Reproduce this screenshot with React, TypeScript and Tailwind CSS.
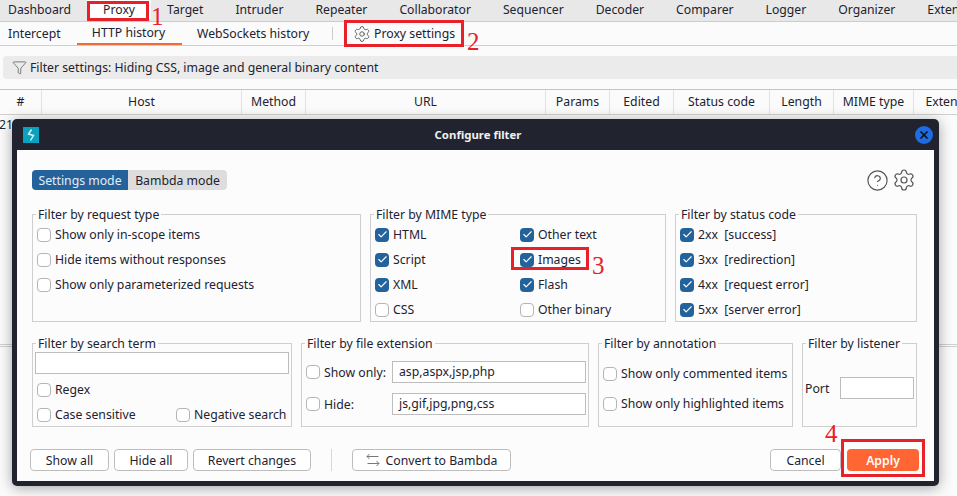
import { Settings, CircleHelp, Check, X, Funnel } from 'lucide-react';

const topTabs = [
  'Dashboard',
  'Proxy',
  'Target',
  'Intruder',
  'Repeater',
  'Collaborator',
  'Sequencer',
  'Decoder',
  'Comparer',
  'Logger',
  'Organizer',
  'Extensions',
];

const columns = [
  ['#', 'w-[42px]'],
  ['Host', 'w-[200px]'],
  ['Method', 'w-[64px]'],
  ['URL', 'w-[240px]'],
  ['Params', 'w-[64px]'],
  ['Edited', 'w-[64px]'],
  ['Status code', 'w-[96px]'],
  ['Length', 'w-[64px]'],
  ['MIME type', 'w-[80px]'],
  ['Extension', 'w-[80px]'],
];

function Box({ checked, label, className }: { checked?: boolean; label: string; className?: string }) {
  return (
    <div className={`flex items-center gap-1 h-[25px] whitespace-pre ${className ?? ''}`}>
      {checked ? (
        <span className="w-[14px] h-[14px] rounded-[4px] bg-[#23629b] flex items-center justify-center shrink-0">
          <Check size={11} strokeWidth={2.5} className="text-white" />
        </span>
      ) : (
        <span className="w-[14px] h-[14px] rounded-[4px] border border-[#b5b5b5] bg-white shrink-0" />
      )}
      <span>{label}</span>
    </div>
  );
}

function Group({ title, className, children }: { title: string; className: string; children?: React.ReactNode }) {
  return (
    <fieldset className={`border border-[#cfcfcf] min-w-0 shrink-0 ${className}`}>
      <legend className="ml-[3px] px-[2px] h-[18px] leading-[20px]">{title}</legend>
      {children}
    </fieldset>
  );
}

function Button({ className, children }: { className: string; children: React.ReactNode }) {
  return (
    <button className={`h-[22px] rounded-[4px] border border-[#bdbdbd] bg-white flex items-center justify-center shrink-0 ${className}`}>
      {children}
    </button>
  );
}

function Marker({ n, className }: { n: string; className: string }) {
  return (
    <span className={`absolute text-[#e8202a] text-[25px] leading-none font-['Liberation_Serif',serif] ${className}`}>{n}</span>
  );
}

export default function App() {
  return (
    <div className="relative w-[957px] h-[496px] overflow-hidden bg-[#fbfbfb] text-[#1c2230] text-[12.25px] leading-[19px] font-['Noto_Sans',sans-serif]">

      {/* Main tabs */}
      <div className="flex h-[22px] -ml-2 bg-[#e8e8e8] border-b border-[#cccccc] whitespace-nowrap text-[12.2px]">
        {topTabs.map((name) => (
          <div key={name} className={`px-4 shrink-0 flex items-center h-[19px] ${name === 'Proxy' ? 'bg-white' : ''}`}>
            {name}
          </div>
        ))}
      </div>

      {/* Proxy tabs */}
      <div className="flex items-center h-[24px] border-b border-[#cfcfcf]">
        <div className="w-[77px] pl-2">Intercept</div>
        <div className="w-[105px] h-full flex items-center justify-center pr-[2px] border-b-2 border-[#f26a35]">HTTP history</div>
        <div className="ml-[15px] w-[135px]">WebSockets history</div>
        <div className="w-px h-[13px] bg-[#cccccc]" />
        <div className="ml-[20px] flex items-center gap-[3px]">
          <Settings size={18} strokeWidth={1.2} className="text-[#555555]" />
          Proxy settings
        </div>
      </div>

      {/* Filter bar */}
      <div className="mt-[10px] ml-[3px] h-[23px] bg-[#ebebeb] rounded-l-[4px] flex items-center gap-[3px] pl-[9px]">
        <Funnel size={15} strokeWidth={1.2} className="text-[#555555]" />
        Filter settings: Hiding CSS, image and general binary content
      </div>

      {/* Table */}
      <div className="mt-[10px] flex h-[26px] border-y border-[#d0d0d0] border-t-[#c4c4c4] whitespace-nowrap">
        {columns.map(([name, w]) => (
          <div key={name} className={`${w} shrink-0 flex items-center justify-center pb-px border-r border-[#e2e2e2]`}>
            {name}
          </div>
        ))}
      </div>
      <div className="-ml-px h-[18px]">219</div>
      <div className="mt-[211px] h-[3px] border-y border-[#d0d0d0]" />

      {/* Dialog */}
      <div className="absolute left-[12px] top-[119px] w-[927px] h-[367px] rounded-[5px] bg-[#21242e] shadow-[0_2px_14px_rgba(0,0,0,0.35)] flex flex-col px-[5px] pb-[5px]">
        <div className="relative h-[31px] shrink-0 flex items-center justify-center -mx-[5px] pl-[5px]">
          <span className="absolute left-[11px] top-[8px] w-4 h-4 bg-[#0ba2bd] flex items-center justify-center">
            <svg width="8" height="12" viewBox="0 0 8 12" fill="none" stroke="#dff6fa" strokeWidth="1.4">
              <path d="M4.5 0.5 L1.5 5 L6.5 6.5 L3.5 11.5" />
            </svg>
          </span>
          <span className="text-[11.4px] font-bold text-[#eef0f3]">Configure filter</span>
          <span className="absolute right-[6px] top-[7px] w-[18px] h-[18px] rounded-full bg-[#1f6be0] flex items-center justify-center">
            <X size={12} strokeWidth={3.5} className="text-[#10131a]" />
          </span>
        </div>

        <div className="flex-1 bg-[#fcfcfc] pl-[15px] pt-[20px] flex flex-col">
          <div className="flex items-center h-[20px]">
            <div className="w-[96px] h-full bg-[#23629b] text-[#e4edf5] rounded-l-[4px] flex items-center justify-center">Settings mode</div>
            <div className="w-[99px] h-full bg-[#dddddd] rounded-r-[4px] flex items-center justify-center">Bambda mode</div>
            <div className="ml-auto mr-[18px] flex items-center gap-[3px] text-[#555555]">
              <CircleHelp size={23} strokeWidth={1.2} />
              <Settings size={24} strokeWidth={1.2} />
            </div>
          </div>

          <div className="flex gap-[9px] mt-[15px] h-[117px]">
            <Group title="Filter by request type" className="w-[329px]">
              <div className="-mt-[1px] pl-[4px]">
                <Box label="Show only in-scope items" />
                <Box label="Hide items without responses" />
                <Box label="Show only parameterized requests" />
              </div>
            </Group>
            <Group title="Filter by MIME type" className="w-[296px]">
              <div className="-mt-[1px] pl-[4px] grid grid-cols-[145px_1fr]">
                <Box checked label="HTML" />
                <Box checked label="Other text" />
                <Box checked label="Script" />
                <Box checked label="Images" />
                <Box checked label="XML" />
                <Box checked label="Flash" />
                <Box label="CSS" />
                <Box label="Other binary" />
              </div>
            </Group>
            <Group title="Filter by status code" className="w-[242px]">
              <div className="-mt-[1px] pl-[4px]">
                <Box checked label="2xx  [success]" />
                <Box checked label="3xx  [redirection]" />
                <Box checked label="4xx  [request error]" />
                <Box checked label="5xx  [server error]" />
              </div>
            </Group>
          </div>

          <div className="flex gap-[9px] mt-[12px] h-[93px]">
            <Group title="Filter by search term" className="w-[260px]">
              <div className="px-[2px]">
                <div className="h-[22px] border border-[#bdbdbd] bg-white" />
                <Box label="Regex" className="pl-[2px] mt-[3px]" />
                <div className="flex">
                  <Box label="Case sensitive" className="pl-[2px] w-[141px]" />
                  <Box label="Negative search" />
                </div>
              </div>
            </Group>
            <Group title="Filter by file extension" className="w-[288px]">
              <div className="pl-[4px]">
                <div className="flex items-center mt-[9px] h-[22px]">
                  <Box label="Show only:" className="w-[86px]" />
                  <div className="w-[194px] h-[22px] border border-[#bdbdbd] bg-white pl-[6px] leading-[20px]">asp,aspx,jsp,php</div>
                </div>
                <div className="flex items-center mt-[10px] h-[22px]">
                  <Box label="Hide:" className="w-[86px]" />
                  <div className="w-[194px] h-[22px] border border-[#bdbdbd] bg-white pl-[6px] leading-[20px]">js,gif,jpg,png,css</div>
                </div>
              </div>
            </Group>
            <Group title="Filter by annotation" className="w-[195px]">
              <div className="pl-[4px]">
                <Box label="Show only commented items" className="mt-[9px]" />
                <Box label="Show only highlighted items" className="mt-[5px]" />
              </div>
            </Group>
            <Group title="Filter by listener" className="w-[115px]">
              <div className="flex items-center mt-[25px] h-[22px] pl-[2px]">
                <span className="w-[35px]">Port</span>
                <div className="w-[74px] h-[22px] border border-[#bdbdbd] bg-white" />
              </div>
            </Group>
          </div>

          <div className="flex items-center mt-[22px] -ml-[2px] pr-[15px]">
            <Button className="w-[79px]">Show all</Button>
            <Button className="w-[74px] ml-[5px]">Hide all</Button>
            <Button className="w-[118px] ml-[5px]">Revert changes</Button>
            <div className="w-px h-[22px] bg-[#d8d8d8] ml-[20px]" />
            <Button className="w-[159px] ml-[20px] gap-[6px]">
              <svg width="14" height="14" viewBox="0 0 14 14" fill="none" stroke="#777777" strokeWidth="1">
                <path d="M3.5 1 L1 3.5 L3.5 6 M1 3.5 H12.5 M10.5 8 L13 10.5 L10.5 13 M13 10.5 H1.5" />
              </svg>
              Convert to Bambda
            </Button>
            <Button className="w-[71px] ml-auto">Cancel</Button>
            <button className="w-[72px] h-[22px] ml-[6px] rounded-[4px] bg-[#ff6633] text-white font-semibold flex items-center justify-center shrink-0">Apply</button>
          </div>
        </div>
      </div>

      {/* Red annotations */}
      <div className="absolute left-[87px] top-[1px] w-[62px] h-[20px] border-[3px] border-[#e8202a]" />
      <Marker n="1" className="left-[151px] top-[4px]" />
      <div className="absolute left-[344px] top-[20px] w-[120px] h-[27px] border-[3px] border-[#e8202a]" />
      <Marker n="2" className="left-[467px] top-[29px]" />
      <div className="absolute left-[511px] top-[247px] w-[78px] h-[23px] border-[3px] border-[#e8202a]" />
      <Marker n="3" className="left-[592px] top-[253px]" />
      <div className="absolute left-[841px] top-[439px] w-[84px] h-[38px] border-[3px] border-[#e8202a]" />
      <Marker n="4" className="left-[825px] top-[421px]" />
    </div>
  );
}
